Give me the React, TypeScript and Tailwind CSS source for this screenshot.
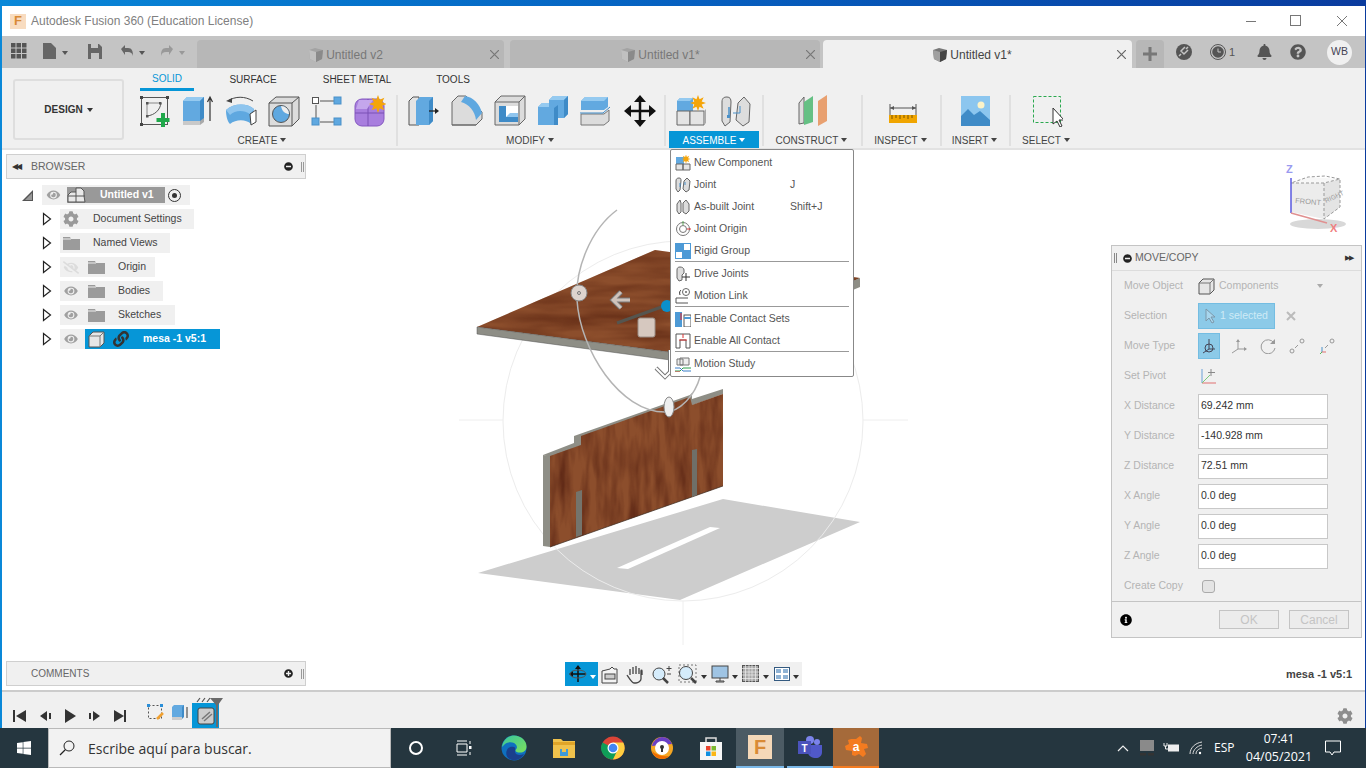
import type { ReactNode } from "react";
import { FaBell, FaCog, FaEye, FaEyeSlash, FaInfoCircle, FaLink, FaMinusCircle, FaPlusCircle, FaQuestionCircle, FaWindows } from "react-icons/fa";

const ui = "font-['Liberation_Sans',Arial,sans-serif]";

function Ico({ w = 32, h = 32, children, className }: { w?: number; h?: number; children: ReactNode; className?: string }) {
  return (
    <svg width={w} height={h} viewBox={`0 0 ${w} ${h}`} className={className} fill="none">
      {children}
    </svg>
  );
}

function Caret({ color = "#555" }: { color?: string }) {
  return <span className="inline-block w-0 h-0 border-l-[3.5px] border-r-[3.5px] border-t-[4px] border-l-transparent border-r-transparent" style={{ borderTopColor: color }} />;
}

function TabCube({ dark }: { dark?: boolean }) {
  return (
    <Ico w={16} h={16}>
      <path d="M1 3l6-2 8 2-1 9-6 3-6-3z" fill={dark ? "#777" : "#a3a3a3"} />
      <path d="M8 5l7-2-1 9-6 3z" fill={dark ? "#444" : "#8a8a8a"} />
      <path d="M1 3l7 2v10l-6-3z" fill={dark ? "#a0a0a0" : "#c0c0c0"} />
    </Ico>
  );
}

// ribbon icons
const SketchIcon = () => (
  <Ico>
    <rect x="2.5" y="2.5" width="26" height="27" stroke="#555" />
    {[[1, 1], [27, 1], [1, 28]].map(([x, y]) => <rect key={x + "-" + y} x={x} y={y} width="3" height="3" fill="#444" />)}
    <path d="M8 8h14M8 8v14" stroke="#888" />
    <path d="M8 21c8-1 13-6 14-13" stroke="#555" />
    <rect x="7" y="7" width="2.5" height="2.5" fill="#555" /><rect x="7" y="20" width="2.5" height="2.5" fill="#555" /><rect x="20" y="7" width="2.5" height="2.5" fill="#555" />
    <path d="M24 18v14M17.5 25h13" stroke="#1fa84a" strokeWidth="4" />
  </Ico>
);
const ExtrudeIcon = () => (
  <Ico>
    <path d="M1 6l4-4h17v24l-4 0H1z" fill="#62a9e0" />
    <path d="M1 6l4-4h17l-4 4z" fill="#95caf0" />
    <path d="M18 6l4-4v22l-4 4z" fill="#3f8bc7" />
    <path d="M1 26h17v4H1z" fill="#c9c9c9" /><path d="M18 26l4-3v4l-4 3z" fill="#aaa" />
    <path d="M28 26V3M25.5 7L28 2l2.500 5" stroke="#333" strokeWidth="1.2" />
  </Ico>
);
const RevolveIcon = () => (
  <Ico>
    <path d="M3 6c7-5 17-5 25 0" stroke="#444" strokeWidth="1" /><path d="M1 6l6-3v5z" fill="#444" />
    <path d="M1 15C9 8 22 8 29 14L26 29C21 24 11 24 5 29C2 26 1 20 1 15z" fill="#5fa8e0" />
    <path d="M1 15C9 8 22 8 29 14L25 19C19 15 10 15 5 20z" fill="#8fc5ee" />
    <path d="M25 19l6-4v12l-5 3z" fill="#fff" stroke="#444" />
  </Ico>
);
const HoleIcon = () => (
  <Ico>
    <path d="M1 8l7-6h23v22l-7 7H1z" fill="#dcdcdc" stroke="#555" />
    <path d="M1 8h23v23M24 8l7-6" stroke="#555" />
    <circle cx="13" cy="19" r="8.500" fill="#5fa8e0" stroke="#555" />
    <path d="M13 11a8 8 0 0 1 8 8c-3 0-7-2-8-8z" fill="#eee" />
  </Ico>
);
const PatternIcon = () => (
  <Ico>
    <path d="M9 6h14M5 10v14M9 27h14" stroke="#555" />
    <rect x="1.500" y="2.500" width="6" height="6" fill="#fff" stroke="#555" />
    <rect x="23" y="2" width="7" height="7" fill="#5fa8e0" stroke="#4a90c8" />
    <rect x="1" y="23" width="7" height="7" fill="#5fa8e0" stroke="#4a90c8" />
    <rect x="23" y="23" width="7" height="7" fill="#5fa8e0" stroke="#4a90c8" />
  </Ico>
);
const Star = ({ cx, cy, r }: { cx: number; cy: number; r: number }) => {
  const pts: string[] = [];
  for (let i = 0; i < 16; i++) {
    const a = (i * Math.PI) / 8;
    const d = i % 2 ? r * 0.5 : r;
    pts.push(`${cx + d * Math.cos(a)},${cy + d * Math.sin(a)}`);
  }
  return <polygon points={pts.join(" ")} fill="#f5a50a" />;
};
const FormIcon = () => (
  <Ico>
    <rect x="1" y="4" width="29" height="27" rx="7" fill="#a87ede" stroke="#8558c0" />
    <path d="M1 18h29M14 4v27" stroke="#7b50b5" />
    <path d="M5 5h14l-6 9H2z" fill="#c4a6ec" />
    <Star cx={24} cy={9} r={9} />
  </Ico>
);
const PressPullIcon = () => (
  <Ico>
    <path d="M1 6l4-4h6v28H1z" fill="#e4e4e4" stroke="#555" />
    <path d="M8 6l4-4h13v24l-4 4H8z" fill="#62a9e0" />
    <path d="M21 6l4-4v24l-4 4z" fill="#3f8bc7" />
    <path d="M21 16h8" stroke="#222" strokeWidth="1.300" /><path d="M27 13l4 3-4 3z" fill="#222" />
  </Ico>
);
const FilletIcon = () => (
  <Ico>
    <path d="M1 7L7 1h8l16 16v7l-6 6H1z" fill="#dcdcdc" stroke="#666" />
    <path d="M14 1c8 1 15 8 17 17l-6 7c-1-9-7-16-15-18z" fill="#5fa8e0" />
    <path d="M1 30h24" stroke="#666" />
  </Ico>
);
const ShellIcon = () => (
  <Ico>
    <path d="M1 7l6-6h24v23l-6 6H1z" fill="#dcdcdc" stroke="#666" />
    <path d="M1 7h24v23M25 7l6-6" stroke="#666" />
    <path d="M5 11h7v11h12v5H5z" fill="#3f8bc7" />
    <path d="M12 11h12v11H12z" fill="#fff" /><path d="M12 22l4-4h8v4z" fill="#8fc5ee" />
  </Ico>
);
const CombineIcon = () => (
  <Ico>
    <path d="M12 5l4-4h15v18l-4 4h-6v7H1V12l4-4h7z" fill="#62a9e0" />
    <path d="M12 5l4-4h15l-4 4zM1 12l4-4h7v4z" fill="#95caf0" />
    <path d="M27 5l4-4v18l-4 4zM17 13l4-3v20l-4 0z" fill="#3f8bc7" />
  </Ico>
);
const SplitIcon = () => (
  <Ico>
    <path d="M1 6l4-4h23v10l-4 3H1z" fill="#62a9e0" /><path d="M1 6l4-4h23l-4 4z" fill="#95caf0" />
    <path d="M1 19h23l5-4v11l-5 4H1z" fill="#dcdcdc" stroke="#777" />
    <path d="M0 18h23l7-6" stroke="#3f8bc7" />
  </Ico>
);
const MoveIcon = () => (
  <Ico>
    <path d="M16 3v26M3 16h26" stroke="#111" strokeWidth="2.500" />
    <path d="M16 0l6 7H10zM16 32l6-7H10zM0 16l7-6v12zM32 16l-7-6v12z" fill="#111" />
  </Ico>
);
const NewCompIcon = () => (
  <Ico>
    <path d="M1 6l3-3h13v13H1z" fill="#62a9e0" /><path d="M1 6l3-3h13l-3 3z" fill="#95caf0" />
    <path d="M1 16h13v14H1z" fill="#e4e4e4" stroke="#666" /><path d="M14 16h14v14H14z" fill="#e4e4e4" stroke="#666" /><path d="M28 16l2-2v14l-2 2z" fill="#aaa" />
    <Star cx={22} cy={8} r={8} />
  </Ico>
);
const JointIcon = () => (
  <Ico>
    <path d="M2 7c0-4 2-5 5-5s4 2 4 5l-1 20-5 4-3-5z" fill="#ddd" stroke="#666" />
    <path d="M30 9l-6-7-6 6-2 17 7 6 6-4z" fill="#ddd" stroke="#666" />
    <path d="M9 12v9" stroke="#4a90c8" strokeWidth="1.500" /><path d="M20 11v7h-7" stroke="#4a90c8" /><rect x="7" y="20" width="3" height="3" fill="#4a90c8" />
  </Ico>
);
const ConstructIcon = () => (
  <Ico>
    <path d="M2 8l5-6v26l-5 1z" fill="#ddd" stroke="#666" />
    <path d="M7 7l9-6v26l-9 3z" fill="#65c084" />
    <path d="M21 6l9-6v26l-9 5z" fill="#e8a070" />
  </Ico>
);
const InspectIcon = () => (
  <Ico>
    <path d="M4 9v12M30 9v12" stroke="#555" /><path d="M4 13h26" stroke="#555" />
    <path d="M4 13l4-2v4zM30 13l-4-2v4z" fill="#555" />
    <rect x="3" y="20" width="28" height="8" fill="#f0a500" />
    <path d="M6 20v4M10 20v3M14 20v4M18 20v3M22 20v4M26 20v3" stroke="#7a5500" />
  </Ico>
);
const InsertIcon = () => (
  <Ico>
    <rect x="1" y="1" width="29" height="30" fill="#8cc6ef" />
    <path d="M1 31V21l7-7 6 6 6-4 10 9v6z" fill="#3f8bc7" />
    <circle cx="21" cy="10" r="3.500" fill="#fdf3c8" />
  </Ico>
);
const SelectIcon = () => (
  <Ico>
    <rect x="2.500" y="1.500" width="27" height="26" stroke="#2aa84f" strokeDasharray="3 2" />
    <path d="M22 19v16l4-3 3 6 2-1-3-6h5z" transform="translate(0 -6)" fill="#fff" stroke="#333" />
  </Ico>
);

const groups: { label: string; width: number; pad?: number; slot?: number; icons: ReactNode[]; active?: boolean }[] = [
  { label: "CREATE", width: 266, pad: 3, slot: 43, icons: [<SketchIcon />, <ExtrudeIcon />, <RevolveIcon />, <HoleIcon />, <PatternIcon />, <FormIcon />] },
  { label: "MODIFY", width: 266, pad: 4, slot: 43.200, icons: [<PressPullIcon />, <FilletIcon />, <ShellIcon />, <CombineIcon />, <SplitIcon />, <MoveIcon />] },
  { label: "ASSEMBLE", width: 96, pad: 4, slot: 44, icons: [<NewCompIcon />, <JointIcon />], active: true },
  { label: "CONSTRUCT", width: 97, icons: [<ConstructIcon />] },
  { label: "INSPECT", width: 77, icons: [<InspectIcon />] },
  { label: "INSERT", width: 67, icons: [<InsertIcon />] },
  { label: "SELECT", width: 72, icons: [<SelectIcon />] },
];

function Chevron() {
  return (
    <Ico w={10} h={14} className="shrink-0">
      <path d="M1.500 1.500L8.500 7l-7 5.500z" fill="#fff" stroke="#222" strokeWidth="1.200" />
    </Ico>
  );
}

function Folder() {
  return (
    <Ico w={17} h={14}>
      <path d="M0 1h7l1 2h9v11H0z" fill="#9b9b9b" /><path d="M0 3h8" stroke="#eee" />
    </Ico>
  );
}

const SmallCube = ({ size = 17 }: { size?: number }) => (
  <svg width={size} height={size} viewBox="0 0 17 17" fill="none">
    <path d="M1 5l4-4h11v11l-4 4H1z" fill="#e6e6e6" stroke="#555" />
    <path d="M1 5h11v11M12 5l4-4" stroke="#777" />
  </svg>
);

function TreeRow({ width, icon, label }: { width: number; icon: ReactNode; label: string }) {
  return (
    <div className="flex items-center h-[24px] pl-[36px]">
      <Chevron />
      <div className="ml-[8px] h-[20px] flex items-center bg-[#f0f0f0] text-[10.500px] text-[#444]" style={{ width }}>
        {icon}
        <span>{label}</span>
      </div>
    </div>
  );
}

function BrowserPanel() {
  const eye = <FaEye className="w-[16px] h-[12px] text-[#a0a0a0] ml-[3px] shrink-0" />;
  return (
    <div className="absolute left-[4px] top-[4px] w-[300px]">
      <div className="h-[25px] flex items-center bg-[#f0f0f0] border border-[#cfcfcf] text-[10.500px] text-[#666]">
        <span className="w-[24px] pl-[5px] text-[8px] text-[#333] tracking-[-2px]">◀◀</span>
        <span className="flex-1">BROWSER</span>
        <FaMinusCircle className="w-[9px] h-[9px] text-[#222] mr-[8px]" />
        <span className="w-[3px] h-[10px] border-x border-[#999] mr-[1px]" />
      </div>
      <div className="pt-[4px]">
        <div className="flex items-center h-[24px] pl-[16px]">
          <Ico w={12} h={13} className="shrink-0"><path d="M0 12L11 1v11z" fill="#555" /><path d="M3 11l7-7v7z" fill="#fff" opacity=".4" /></Ico>
          <div className="ml-[8px] w-[148px] h-[20px] flex items-center bg-[#f0f0f0]">
            <FaEye className="w-[17px] h-[12px] text-[#a0a0a0] ml-[3px]" />
            <div className="ml-[5px] w-[98px] h-[16px] bg-[#999] flex items-center text-white font-bold text-[10.500px]">
              <Ico w={19} h={16}><path d="M1 8l3-3h5V1h5l3 3v5l1 6H1z" fill="#e8e8e8" stroke="#555" /><path d="M9 5v10M1 9h17" stroke="#555" /></Ico>
              <span className="ml-[14px]">Untitled v1</span>
            </div>
            <span className="ml-[3px] w-[13px] h-[13px] rounded-full border border-[#333] flex items-center justify-center"><span className="w-[5px] h-[5px] rounded-full bg-[#333]" /></span>
          </div>
        </div>
        <TreeRow width={134} label="Document Settings" icon={<span className="w-[33px] pl-[3px] shrink-0"><FaCog className="w-[16px] h-[16px] text-[#9a9a9a]" /></span>} />
        <TreeRow width={110} label="Named Views" icon={<span className="w-[33px] pl-[3px] shrink-0"><Folder /></span>} />
        <TreeRow width={95} label="Origin" icon={<span className="w-[58px] pl-[3px] shrink-0 flex items-center"><FaEyeSlash className="w-[16px] h-[13px] text-[#dcdcdc]" /><span className="ml-[9px]"><Folder /></span></span>} />
        <TreeRow width={103} label="Bodies" icon={<span className="w-[58px] pl-[3px] shrink-0 flex items-center"><FaEye className="w-[16px] h-[12px] text-[#a0a0a0]" /><span className="ml-[9px]"><Folder /></span></span>} />
        <TreeRow width={115} label="Sketches" icon={<span className="w-[58px] pl-[3px] shrink-0 flex items-center"><FaEye className="w-[16px] h-[12px] text-[#a0a0a0]" /><span className="ml-[9px]"><Folder /></span></span>} />
        <div className="flex items-center h-[24px] pl-[36px]">
          <Chevron />
          <div className="ml-[8px] h-[20px] w-[25px] bg-[#f0f0f0] flex items-center">{eye}</div>
          <div className="h-[20px] w-[135px] bg-[#0696d7] flex items-center text-white font-bold text-[10.500px]">
            <span className="ml-[3px]"><SmallCube /></span>
            <FaLink className="ml-[8px] w-[16px] h-[16px] text-[#333]" />
            <span className="ml-[14px]">mesa -1 v5:1</span>
          </div>
        </div>
      </div>
    </div>
  );
}

const menuIcon = {
  comp: <Ico w={16} h={16}><path d="M1 2h8v7H1z" fill="#62a9e0" /><path d="M1 9h7v6H1zM8 9h7v6H8z" fill="#e4e4e4" stroke="#666" /><Star cx={11} cy={4} r={4.500} /></Ico>,
  joint: <Ico w={16} h={16}><path d="M1 4c0-2 1-3 3-3s2 1 2 3l-1 9-2 2-2-3zM15 4l-3-3-3 3-1 8 3 3 3-2z" fill="#ddd" stroke="#666" /><path d="M5 6v4M10 5v3" stroke="#4a90c8" /></Ico>,
  built: <Ico w={16} h={16}><path d="M2 5l3-4 1 3v9l-2 2-2-3zM14 5l-3-4-3 3v9l3 2 3-3z" fill="#ddd" stroke="#666" /></Ico>,
  origin: <Ico w={16} h={16}><circle cx="8" cy="8" r="6.500" stroke="#777" /><circle cx="8" cy="8" r="3.500" stroke="#777" /><path d="M8 0v4" stroke="#5aa857" /><path d="M12 8h4" stroke="#d33" /></Ico>,
  rigid: <Ico w={16} h={16}><rect width="16" height="16" fill="#4d9ad6" /><rect x="9" y="1" width="6" height="6" fill="#fff" /><rect x="1" y="9" width="6" height="6" fill="#fff" /></Ico>,
  drive: <Ico w={16} h={16}><path d="M2 4c0-2 1-3 3-3s4 1 4 3v3l-2 2v5l-3 1-2-3z" fill="#ddd" stroke="#666" /><path d="M11 7v8M7 11h8" stroke="#333" /></Ico>,
  link: <Ico w={16} h={16}><circle cx="11" cy="4" r="3.500" stroke="#666" /><circle cx="11" cy="4" r="1" fill="#666" /><path d="M5 7c-1-3 0-4 1-5" stroke="#333" /><path d="M1 10h12M1 15h12M1 10v5" stroke="#555" /></Ico>,
  sets: <Ico w={16} h={16}><rect y="1" width="7" height="15" fill="#4d9ad6" /><path d="M6 2v7" stroke="#e22" /><rect x="9" y="4" width="7" height="12" fill="#fff" stroke="#555" /><path d="M9 7h7" stroke="#4d9ad6" strokeWidth="2" /></Ico>,
  all: <Ico w={16} h={16}><path d="M1 15V1h14v14h-4V7H5v8z" stroke="#555" /><path d="M4 7h8M8 1v4" stroke="#d33" /></Ico>,
  study: <Ico w={16} h={16}><path d="M5 2h9v7H5zM2 3h6v6H2z" fill="#eee" stroke="#777" /><path d="M0 15h5l3-3h8" stroke="#2a9d4b" /><path d="M0 12h5l3 3h8" stroke="#3b7fc8" /><path d="M0 16h5" stroke="#d33" /></Ico>,
};

const menuGroups: { icon: ReactNode; label: string; key?: string }[][] = [
  [
    { icon: menuIcon.comp, label: "New Component" },
    { icon: menuIcon.joint, label: "Joint", key: "J" },
    { icon: menuIcon.built, label: "As-built Joint", key: "Shift+J" },
    { icon: menuIcon.origin, label: "Joint Origin" },
    { icon: menuIcon.rigid, label: "Rigid Group" },
  ],
  [
    { icon: menuIcon.drive, label: "Drive Joints" },
    { icon: menuIcon.link, label: "Motion Link" },
  ],
  [
    { icon: menuIcon.sets, label: "Enable Contact Sets" },
    { icon: menuIcon.all, label: "Enable All Contact" },
  ],
  [{ icon: menuIcon.study, label: "Motion Study" }],
];

function AssembleMenu() {
  return (
    <div className="absolute left-[668px] top-[-1px] w-[184px] h-[228px] bg-white border border-[#888] rounded-[2px] pt-[2px] text-[10.500px] text-[#555]">
      {menuGroups.map((g, i) => (
        <div key={i} className={i > 0 ? "border-t border-[#999] mx-[4px] -mt-[1px] pt-[1px]" : ""}>
          {g.map((m) => (
            <div key={m.label} className={"flex items-center h-[22px] " + (i > 0 ? "pl-[0px]" : "pl-[4px]")}>
              <span className="w-[19px] flex items-center">{m.icon}</span>
              <span className="w-[96px] ml-[0px]">{m.label}</span>
              <span>{m.key}</span>
            </div>
          ))}
        </div>
      ))}
    </div>
  );
}

const distances = [
  ["X Distance", "69.242 mm"],
  ["Y Distance", "-140.928 mm"],
  ["Z Distance", "72.51 mm"],
  ["X Angle", "0.0 deg"],
  ["Y Angle", "0.0 deg"],
  ["Z Angle", "0.0 deg"],
];

function MovePanel() {
  return (
    <div className="absolute left-[1109px] top-[95px] w-[251px] h-[393px] bg-[#f0f0f0] border border-[#c4c4c4] flex flex-col text-[10.500px] text-[#b4b4b4]">
      <div className="h-[25px] shrink-0 flex items-center border-b border-[#dcdcdc] text-[#666]">
        <span className="ml-[2px] w-[3px] h-[10px] border-x border-[#888]" />
        <FaMinusCircle className="ml-[6px] w-[9px] h-[9px] text-[#222]" />
        <span className="ml-[3px] flex-1">MOVE/COPY</span>
        <span className="text-[7px] text-[#333] tracking-[-1.500px] mr-[9px]">▶▶</span>
      </div>
      <div className="pl-[12px] flex-1">
        <div className="flex items-center h-[30px]">
          <span className="w-[74px]">Move Object</span>
          <SmallCube />
          <span className="ml-[4px] w-[98px]">Components</span>
          <Caret color="#aaa" />
        </div>
        <div className="flex items-center h-[30px]">
          <span className="w-[74px]">Selection</span>
          <div className="w-[77px] h-[26px] bg-[#8ccae8] border border-[#74bde2] flex items-center pl-[6px] text-[#cfeaf6]">
            <Ico w={12} h={16}><path d="M1 1v12l3-3 3 5 2-1-3-5h4z" fill="#a7d6ee" stroke="#7d98aa" /></Ico>
            <span className="ml-[3px]">1 selected</span>
          </div>
          <svg width="10" height="10" viewBox="0 0 10 10" className="ml-[11px]"><path d="M1 1l8 8M9 1L1 9" stroke="#bbb" strokeWidth="2" /></svg>
        </div>
        <div className="flex items-center h-[30px]">
          <span className="w-[74px]">Move Type</span>
          <div className="w-[22px] h-[26px] bg-[#8ccae8] border border-[#74bde2] flex items-center justify-center">
            <Ico w={16} h={16}><path d="M8 1v10M8 11l6 0M8 11l-6 4" stroke="#445" /><circle cx="8" cy="10" r="4" stroke="#445" /></Ico>
          </div>
          <Ico w={16} h={16} className="ml-[11px]"><path d="M7 2v9h8M7 11l-6 4" stroke="#999" /><path d="M5 4l2-3 2 3zM13 9l3 2-3 2z" fill="#999" /></Ico>
          <Ico w={16} h={16} className="ml-[13px]"><path d="M14 5a7 7 0 1 0 1 5" stroke="#999" /><path d="M15 1v5h-5z" fill="#999" /></Ico>
          <Ico w={16} h={16} className="ml-[13px]"><circle cx="13" cy="3" r="2" stroke="#999" /><circle cx="3" cy="13" r="2" stroke="#999" /><path d="M9 7l-3 3" stroke="#999" /></Ico>
          <Ico w={16} h={16} className="ml-[14px]"><circle cx="13" cy="3" r="2" stroke="#999" /><path d="M9 7l-3 3" stroke="#999" /><path d="M3 9v5" stroke="#4a90c8" /><path d="M3 14h4" stroke="#e07070" /><path d="M3 14l-2 2" stroke="#5ab85a" /></Ico>
        </div>
        <div className="flex items-center h-[30px]">
          <span className="w-[76px]">Set Pivot</span>
          <Ico w={16} h={16}><path d="M2 1v14" stroke="#6aa0d8" /><path d="M2 15h14" stroke="#e07070" /><path d="M2 15l8-8" stroke="#7cc87c" /><path d="M11 1v7M8 4.500h7" stroke="#888" /></Ico>
        </div>
        {distances.map(([label, value]) => (
          <div key={label} className="flex items-center h-[30px]">
            <span className="w-[74px]">{label}</span>
            <div className="w-[130px] h-[25px] bg-white border border-[#c8c8c8] flex items-center pl-[2px] text-[#333]">{value}</div>
          </div>
        ))}
        <div className="flex items-center h-[30px]">
          <span className="w-[78px]">Create Copy</span>
          <span className="w-[13px] h-[13px] rounded-[3px] border border-[#aaa] bg-[#e4e4e4]" />
        </div>
      </div>
      <div className="h-[36px] shrink-0 border-t border-[#c4c4c4] flex items-center text-[12px] text-[#c4c4c4]">
        <FaInfoCircle className="ml-[8px] w-[12px] h-[12px] text-black" />
        <div className="ml-[87px] w-[60px] h-[19px] bg-[#ececec] border border-[#c4c4c4] flex items-center justify-center">OK</div>
        <div className="ml-[10px] w-[60px] h-[19px] bg-[#ececec] border border-[#c4c4c4] flex items-center justify-center">Cancel</div>
      </div>
    </div>
  );
}

function Scene() {
  return (
    <svg className="absolute inset-0" width="1363" height="540" viewBox="2 150 1363 540" fill="none">
      <defs>
        <filter id="woodH" x="0" y="0" width="100%" height="100%" colorInterpolationFilters="sRGB">
          <feTurbulence type="fractalNoise" baseFrequency="0.012 0.07" numOctaves="3" seed="7" result="n" />
          <feColorMatrix in="n" type="matrix" values="0 0 0 0 0.36 0 0 0 0 0.15 0 0 0 0 0.07 1.500 0 0 0 -0.50" />
          <feComposite in2="SourceGraphic" operator="in" result="s" />
          <feMerge><feMergeNode in="SourceGraphic" /><feMergeNode in="s" /></feMerge>
        </filter>
        <filter id="woodV" x="0" y="0" width="100%" height="100%" colorInterpolationFilters="sRGB">
          <feTurbulence type="fractalNoise" baseFrequency="0.1 0.02" numOctaves="3" seed="11" result="n" />
          <feColorMatrix in="n" type="matrix" values="0 0 0 0 0.36 0 0 0 0 0.15 0 0 0 0 0.08 1.500 0 0 0 -0.52" />
          <feComposite in2="SourceGraphic" operator="in" result="s" />
          <feMerge><feMergeNode in="SourceGraphic" /><feMergeNode in="s" /></feMerge>
        </filter>
      </defs>
      <polygon points="478,573 723,499 860,522 680,600" fill="#cdcdcd" />
      <polygon points="617,568 710,527 720,528 628,569" fill="#fff" />
      <circle cx="683" cy="421" r="180" stroke="#ececec" />
      <path d="M459 420h44M863 420h45M683 601v44" stroke="#eeeeee" />
      {/* lower board */}
      <polygon points="543,455 574,443 574,436 690,395 692,393 692,399 723,389 723,394 581,446 550,457" fill="#8e8e86" />
      <polygon points="543,455 550,456 550,547 543,546" fill="#8e8e86" />
      <polygon points="550,456 581,445 581,436 690,397 692,405 723,394 723,486 550,547" fill="#8c4e2c" filter="url(#woodV)" />
      <path d="M550 547L723 486" stroke="#3a2a20" strokeWidth=".7" />
      <polygon points="692,450 697,449 697,495 692,497" fill="#6f6f68" />
      <polygon points="576,492 582,490 582,535 576,537" fill="#74746c" />
      {/* top plate */}
      <polygon points="477,327 655,250 860,278 700,356" fill="#8c4e2c" filter="url(#woodH)" />
      <polygon points="477,327 700,356 700,364 477,334" fill="#8e8e86" stroke="#555" strokeWidth=".5" />
      <polygon points="848,283 860,278 860,287 848,292" fill="#8e8e86" />
      {/* gizmo */}
      <path d="M617 210C590 230 575 270 577 300C580 350 620 412 665 412C680 412 695 395 700 377" stroke="#b4b4b4" strokeWidth="1.500" />
      <circle cx="579" cy="293" r="8" fill="#ddd3cd" stroke="#888" />
      <circle cx="579" cy="293" r="1.500" stroke="#777" />
      <ellipse cx="669" cy="407" rx="5" ry="10" fill="#eee" stroke="#888" />
      <path d="M617 323l50-18" stroke="#55554f" strokeWidth="3" />
      <path d="M630 300h-16M621 292l-8 8 8 8" stroke="#777" strokeWidth="5" />
      <path d="M630 300h-16M621 292l-8 8 8 8" stroke="#cfc3bb" strokeWidth="3" />
      <rect x="638" y="318" width="17" height="19" rx="2" fill="#d6c8bf" stroke="#9a8d85" />
      <circle cx="667" cy="306" r="6" fill="#0a90cc" />
      <path d="M670 350v22l-5 5-9-9" stroke="#777" strokeWidth="4" />
      <path d="M670 350v22l-5 5-9-9" stroke="#fff" strokeWidth="2" />
    </svg>
  );
}

function ViewCube() {
  return (
    <svg className="absolute left-[1280px] top-[12px]" width="78" height="76" viewBox="0 0 78 76" fill="none">
      <ellipse cx="36" cy="62" rx="28" ry="5" fill="#d8d8d8" />
      <path d="M9 21h33v36L9 50z" fill="#ececec" />
      <path d="M42 21l16-4v28l-16 12z" fill="#e4e4e4" />
      <path d="M9 21l17-6 32 2-16 4z" fill="#f7f7f7" />
      <path d="M9 21h33l16-4-15-3-17 1zM42 21v36l16-12V17" stroke="#999" strokeDasharray="3 2" />
      <path d="M9 16v35" stroke="#5a5ae0" strokeWidth="1.500" />
      <path d="M9 51l36 10" stroke="#e09090" strokeWidth="1.500" />
      <text x="4" y="11" fontSize="11" fontWeight="700" fill="#9a9af0" fontFamily="Liberation Sans">Z</text>
      <text x="48" y="70" fontSize="11" fontWeight="700" fill="#f08080" fontFamily="Liberation Sans">X</text>
      <text x="13" y="41" fontSize="7.500" fill="#999" fontFamily="Liberation Sans" transform="rotate(5 13 41)">FRONT</text>
      <text x="44" y="41" fontSize="6.500" fill="#999" fontFamily="Liberation Sans" transform="rotate(-25 44 41)">RIGHT</text>
    </svg>
  );
}

function NavBar() {
  const caret = <span className="ml-[3px]"><Caret color="#333" /></span>;
  return (
    <div className="absolute left-[563px] top-[512px] h-[24px] w-[237px] bg-[#f0f0f0] flex items-center">
      <div className="w-[33px] h-full bg-[#0696d7] flex items-center pl-[3px]">
        <Ico w={20} h={20}><path d="M10 2v16M2 10h16" stroke="#111" strokeWidth="1.500" /><path d="M10 1l3 4H7zM1 10l4-3v6z" fill="#111" /><ellipse cx="10" cy="10" rx="8" ry="4" stroke="#555" /></Ico>
        <span className="ml-[2px]"><Caret color="#fff" /></span>
      </div>
      <Ico w={20} h={20} className="ml-[1px]"><path d="M3 7l8-2 2-2 2 2h3v14H3z" fill="#f4f4f4" stroke="#444" /><rect x="6" y="10" width="10" height="5" fill="#ccc" stroke="#444" /></Ico>
      <Ico w={20} h={20} className="ml-[6px]"><path d="M5 11V5M8 10V3M11 10V2M14 10V4M17 11V7c0-1-1-1-1 0v8c0 2-3 4-5 4H9c-2 0-5-5-7-8" stroke="#444" strokeWidth="1.300" /></Ico>
      <Ico w={22} h={20} className="ml-[6px]"><circle cx="8" cy="10" r="6" fill="#d5ecfb" stroke="#444" /><path d="M12 14l5 5" stroke="#444" strokeWidth="2.500" /><path d="M18 2v5M15.500 4.500h5M16 10h4" stroke="#444" /></Ico>
      <Ico w={20} h={20} className="ml-[5px]"><rect x="1" y="1" width="17" height="17" stroke="#777" strokeDasharray="2 2" /><circle cx="8" cy="9" r="6.500" fill="#d5ecfb" stroke="#444" /><path d="M13 14l5 5" stroke="#444" strokeWidth="2.500" /></Ico>
      {caret}
      <Ico w={18} h={20} className="ml-[4px]"><rect x="1" y="2" width="16" height="12" fill="#9fc4e4" stroke="#444" /><path d="M5 17h8v1H5z" stroke="#444" /><path d="M9 14v3" stroke="#444" /></Ico>
      {caret}
      <Ico w={18} h={18} className="ml-[4px]"><rect x=".5" y=".5" width="16" height="16" fill="#a8a8a8" stroke="#555" /><path d="M3.500 0v17M7 0v17M10 0v17M13.500 0v17M0 3.500h17M0 7h17M0 10h17M0 13.500h17" stroke="#eee" strokeWidth=".7" /></Ico>
      {caret}
      <Ico w={16} h={14} className="ml-[5px]"><rect x=".5" y=".5" width="15" height="13" fill="#fff" stroke="#345a80" /><path d="M2 2h5v4H2zM9 2h5v4H9zM2 8h5v4H2zM9 8h5v4H9z" fill="#8eb2d4" /></Ico>
      {caret}
    </div>
  );
}

function EdgeLogo() {
  return (
    <Ico w={26} h={26}>
      <defs>
        <linearGradient id="edgeA" x1="0" y1="0" x2="1" y2="1"><stop offset="0" stopColor="#36c5a0" /><stop offset="1" stopColor="#7ee05a" /></linearGradient>
      </defs>
      <circle cx="13" cy="13" r="12.500" fill="#0f70bf" />
      <path d="M1 12C2 4 8 .5 13 .5c7 0 12.500 5 12.500 11 0 4-3 6-6.500 6-3 0-5-1-4.500-2.500 1-1 2-2 1-4.500C14 7 8 6 4 9c-1 .8-2 2-3 3z" fill="url(#edgeA)" />
      <path d="M11 25c-5-1-7-6-5-10 1-2.500 4-4 7-3 2 .8 1 3 1 5 .5 3 5 4 9 2-2 4-7 7-12 6z" fill="#1a3f8c" />
    </Ico>
  );
}

function ChromeLogo() {
  return (
    <Ico w={24} h={24}>
      <circle cx="12" cy="12" r="11.500" fill="#db4437" />
      <path d="M12 12L1.500 6.500A11.500 11.500 0 0 0 12 23.500L18 12z" fill="#0f9d58" />
      <path d="M12 6.500h10.300A11.500 11.500 0 0 1 12 23.500L17 13z" fill="#ffcd40" />
      <circle cx="12" cy="12" r="5.500" fill="#fff" /><circle cx="12" cy="12" r="4.300" fill="#4285f4" />
    </Ico>
  );
}

function Taskbar() {
  const slot = "h-full flex items-center justify-center shrink-0";
  return (
    <div className="h-[40px] shrink-0 bg-[#25363f] flex items-center text-white relative">
      <div className={slot + " w-[48px]"}><FaWindows className="w-[16px] h-[16px]" /></div>
      <div className="w-[343px] h-full bg-[#f2f2f2] border border-[#b9b9b9] flex items-center pl-[10px] text-[14px] text-[#333] font-['Open_Sans',sans-serif]">
        <Ico w={16} h={16}><circle cx="10" cy="6" r="5" stroke="#222" /><path d="M6.500 9.500L1 15" stroke="#222" strokeWidth="1.300" /></Ico>
        <span className="ml-[13px]">Escribe aquí para buscar.</span>
      </div>
      <div className={slot + " w-[49px]"}><span className="w-[14px] h-[14px] rounded-full border-2 border-white" /></div>
      <div className={slot + " w-[48px]"}>
        <Ico w={16} h={16}><path d="M1 1h10M1 15h10M1 4h10v8H1zM14 1v3M14 12v3" stroke="#fff" /><rect x="13" y="6" width="2.500" height="3" fill="#fff" /></Ico>
      </div>
      <div className={slot + " w-[52px]"}><EdgeLogo /></div>
      <div className={slot + " w-[48px]"}>
        <Ico w={22} h={20}><path d="M0 1h8l2 2h12v17H0z" fill="#f0c24c" /><path d="M0 4h22v3H0z" fill="#e0a528" /><path d="M7 11h8v7H7z" fill="#3f9ad8" /><path d="M9 11h4v3H9z" fill="#f0c24c" /></Ico>
      </div>
      <div className={slot + " w-[50px]"}><ChromeLogo /></div>
      <div className={slot + " w-[47px]"}>
        <Ico w={24} h={24}>
          <circle cx="12" cy="12" r="11" fill="#f5a623" /><path d="M12 1a11 11 0 0 1 10 7l-20 2A11 11 0 0 1 12 1z" fill="#6a3fc4" /><path d="M2 15a11 11 0 0 0 10 8c3 0 5-1 7-3-6 1-13-1-17-5z" fill="#ef6c00" />
          <circle cx="12" cy="12" r="7" fill="#fff" /><circle cx="12" cy="11" r="2" fill="#333" /><rect x="11" y="12" width="2" height="4" fill="#333" />
        </Ico>
      </div>
      <div className={slot + " w-[51px]"}>
        <Ico w={24} h={24}>
          <path d="M1 6h22v18H1z" fill="#f6f6f6" /><path d="M7 6V2h10v4" stroke="#ddd" strokeWidth="1.500" />
          <rect x="7" y="10" width="4.500" height="4.500" fill="#e8432e" /><rect x="12.500" y="10" width="4.500" height="4.500" fill="#7cb82f" /><rect x="7" y="15.500" width="4.500" height="4.500" fill="#0f8fe0" /><rect x="12.500" y="15.500" width="4.500" height="4.500" fill="#fbb615" />
        </Ico>
      </div>
      <div className={slot + " w-[48px] bg-[#4c5b64] border-b-2 border-[#7ab8e8]"}>
        <div className="w-[24px] h-[24px] bg-[#f5d8b8] flex items-center justify-center text-[20px] font-bold text-[#d98a35] font-['Liberation_Sans',sans-serif]">F</div>
      </div>
      <div className={slot + " w-[3px]"} />
      <div className={slot + " w-[46px] border-b-2 border-[#7ab8e8]"}>
        <Ico w={26} h={24}>
          <circle cx="20" cy="7" r="3" fill="#7b83eb" /><circle cx="13" cy="5" r="4" fill="#7b83eb" /><path d="M11 10h14v7c0 4-3 6-6 6-4 0-8-2-8-6z" fill="#5059c9" />
          <rect x="1" y="6" width="13" height="13" fill="#4b53bc" /><text x="7.500" y="16.500" fontSize="10" fontWeight="700" fill="#fff" textAnchor="middle" fontFamily="Liberation Sans">T</text>
        </Ico>
      </div>
      <div className={slot + " w-[46px] bg-[#a56a3a] border-b-2 border-[#f47b20]"}>
        <Ico w={26} h={24}>
          <path d="M13 4l4-3 2 2-1 5 6 1 1 4-4 1 2 5-3 3-4-3-4 2-3-1v-4l-6-1-1-4 4-2-1-4 3-1z" fill="#f47b20" />
          <text x="13" y="16" fontSize="12" fontWeight="700" fill="#fff" textAnchor="middle" fontFamily="Liberation Sans">a</text>
        </Ico>
      </div>
      <div className="flex-1" />
      <div className="flex items-center h-full text-[12px] font-['Open_Sans',sans-serif]">
        <Ico w={12} h={8}><path d="M1 7l5-5 5 5" stroke="#eee" strokeWidth="1.200" /></Ico>
        <Ico w={14} h={16} className="ml-[11px]"><rect width="14" height="11" fill="#8a8a8a" /><rect y="13" width="6" height="2.500" fill="#333" /><rect x="8" y="13" width="6" height="2.500" fill="#333" /></Ico>
        <Ico w={16} h={12} className="ml-[9px]"><path d="M1 1v3h3V1M2.500 4v3h3" stroke="#eee" /><rect x="5.500" y="3" width="10" height="6" stroke="#eee" fill="#eee" /></Ico>
        <Ico w={14} h={14} className="ml-[10px]"><path d="M1 13C1 7 6 2 13 1M4 13c0-4 4-8 9-9M7 13c0-3 2-5 6-6" stroke="#ddd" /><circle cx="11" cy="12" r="1.200" fill="#fff" /></Ico>
        <span className="ml-[11px] w-[31px]">ESP</span>
        <div className="w-[68px] text-center leading-[18px]"><div>07:41</div><div className="text-[12.500px]">04/05/2021</div></div>
        <Ico w={16} h={16} className="ml-[12px] mr-[25px]"><path d="M.5 1h15v11H9l-2 3-2-3H.5z" stroke="#fff" /></Ico>
      </div>
    </div>
  );
}

export default function App() {
  return (
    <div className={"w-[1366px] h-[768px] overflow-hidden flex flex-col bg-white " + ui}>
      <div className="h-[6px] shrink-0 bg-gradient-to-r from-[#0a88d8] via-[#0660c0] to-[#0a3b9e]" />
      <div className="flex-1 min-h-0 flex flex-col border-l-2 border-[#0a88d8] border-r border-r-[#0a3b9e]">
        {/* title bar */}
        <div className="h-[30px] shrink-0 flex items-center bg-white">
          <div className="ml-[8px] w-[16px] h-[15px] bg-[#f8dcc0] flex items-center justify-center text-[13px] font-bold text-[#d98a35]">F</div>
          <span className="ml-[5px] text-[12px] text-[#808080]">Autodesk Fusion 360 (Education License)</span>
          <div className="flex-1" />
          <Ico w={12} h={12}><path d="M1 6.500h10" stroke="#777" /></Ico>
          <Ico w={12} h={12} className="ml-[33px]"><rect x=".5" y=".5" width="10" height="10" stroke="#777" /></Ico>
          <Ico w={12} h={12} className="ml-[34px] mr-[17px]"><path d="M1 1l10 10M11 1L1 11" stroke="#777" /></Ico>
        </div>
        {/* tab bar */}
        <div className="h-[32px] shrink-0 flex items-end bg-[#c4c4c4] text-[12px]">
          <div className="w-[195px] h-full flex items-center pl-[9px] pb-[2px] text-[#555]">
            <Ico w={16} h={16}>
              {[0, 5.500, 11].flatMap((y) => [0, 5.500, 11].map((x) => <rect key={x + "-" + y} x={x} y={y} width="4.500" height="4.500" fill="#555" />))}
            </Ico>
            <Ico w={14} h={16} className="ml-[16px]"><path d="M0 0h8l5 5v11H0z" fill="#666" /></Ico>
            <span className="ml-[5px]"><Caret /></span>
            <Ico w={14} h={15} className="ml-[20px]"><path d="M0 0h11l3 3v12H0z" fill="#666" /><rect x="3" y="0" width="7" height="4" fill="#c4c4c4" /><rect x="3" y="9" width="8" height="6" fill="#c4c4c4" /></Ico>
            <Ico w={14} h={14} className="ml-[18px]"><path d="M1 5l4-4v3h3c4 0 5 3 5 8-1-3-2-4-5-4H5v3z" fill="#666" /></Ico>
            <span className="ml-[5px]"><Caret /></span>
            <Ico w={14} h={14} className="ml-[15px]"><path d="M13 5L9 1v3H6c-4 0-5 3-5 8 1-3 2-4 5-4h3v3z" fill="#999" /></Ico>
            <span className="ml-[5px]"><Caret color="#999" /></span>
          </div>
          <div className="w-[307px] h-[28px] bg-[#b7b7b7] rounded-t-[4px] flex items-center text-[#777]">
            <div className="flex-1 flex items-center justify-center gap-[2px] pl-[4px] pt-[1px]"><TabCube /><span>Untitled v2</span></div>
            <svg width="9" height="9" viewBox="0 0 9 9" className="mr-[5px]"><path d="M0 0l9 9M9 0L0 9" stroke="#777" strokeWidth="1.200" /></svg>
          </div>
          <div className="ml-[6px] w-[310px] h-[28px] bg-[#b7b7b7] rounded-t-[4px] flex items-center text-[#777]">
            <div className="flex-1 flex items-center justify-center gap-[2px] pl-[4px] pt-[1px]"><TabCube /><span>Untitled v1*</span></div>
            <svg width="9" height="9" viewBox="0 0 9 9" className="mr-[5px]"><path d="M0 0l9 9M9 0L0 9" stroke="#777" strokeWidth="1.200" /></svg>
          </div>
          <div className="ml-[3px] w-[309px] h-[28px] bg-[#f0f0f0] rounded-t-[4px] flex items-center text-[#444]">
            <div className="flex-1 flex items-center justify-center gap-[2px] pl-[4px] pt-[1px]"><TabCube dark /><span>Untitled v1*</span></div>
            <svg width="9" height="9" viewBox="0 0 9 9" className="mr-[6px]"><path d="M0 0l9 9M9 0L0 9" stroke="#666" strokeWidth="1.200" /></svg>
          </div>
          <div className="ml-[4px] w-[28px] h-[28px] bg-[#b7b7b7] rounded-t-[4px] flex items-center justify-center">
            <Ico w={14} h={14}><path d="M7 0v14M0 7h14" stroke="#777" strokeWidth="3" /></Ico>
          </div>
          <div className="h-full flex items-center text-[#555]">
            <Ico w={16} h={16} className="ml-[12px]"><circle cx="8" cy="8" r="8" fill="#555" /><path d="M9 3l-4 4 3 3 4-4M5 10l-2 2M10 5l2-2" stroke="#c4c4c4" strokeWidth="1.500" /></Ico>
            <Ico w={16} h={16} className="ml-[18px]"><circle cx="8" cy="8" r="7.500" stroke="#555" /><circle cx="8" cy="8" r="5.800" fill="#555" /><path d="M8 4.500V8h3" stroke="#c4c4c4" /></Ico>
            <span className="ml-[3px] w-[28px] text-[11px]">1</span>
            <FaBell className="w-[15px] h-[16px]" />
            <FaQuestionCircle className="ml-[18px] w-[16px] h-[16px]" />
            <div className="ml-[21px] w-[25px] h-[25px] rounded-full bg-[#f0f0f0] flex items-center justify-center text-[10.500px] text-[#445]">WB</div>
          </div>
        </div>
        {/* ribbon */}
        <div className="h-[82px] shrink-0 flex bg-[#f0f0f0] border-b-2 border-[#e2e2e2]">
          <div className="ml-[11px] mt-[11px] w-[111px] h-[61px] border-2 border-[#dedede] rounded-[3px] flex items-center justify-center gap-[4px] text-[10px] font-bold text-[#333]">
            DESIGN <Caret color="#333" />
          </div>
          <div className="ml-[6px] flex flex-col">
            <div className="h-[24px] flex text-[10px] text-[#333]">
              <div className="ml-[10px] w-[54px] h-[23px] border-b-[3px] border-[#0696d7] text-[#0696d7] flex items-center justify-center">SOLID</div>
              <div className="w-[118px] h-[22px] flex items-center justify-center">SURFACE</div>
              <div className="w-[90px] h-[22px] flex items-center justify-center">SHEET METAL</div>
              <div className="w-[102px] h-[22px] flex items-center justify-center">TOOLS</div>
            </div>
            <div className="flex h-[56px]">
              {groups.map((g, i) => (
                <div key={g.label} className="flex">
                  {i > 0 && <div className="w-[2px] mt-[3px] mb-[2px] bg-[#e0e0e0]" />}
                  <div className="flex flex-col" style={{ width: g.width }}>
                    <div className="flex items-start h-[37px] pt-[3px]" style={{ paddingLeft: g.pad ?? 0, justifyContent: g.pad ? "flex-start" : "center" }}>
                      {g.icons.map((icon, k) => (
                        <div key={k} className="flex justify-center" style={{ width: g.slot ?? 32 }}>{icon}</div>
                      ))}
                    </div>
                    <div className={"h-[17px] mt-[2px] pt-[1px] flex items-center justify-center gap-[3px] text-[10px] " + (g.active ? "mx-[3px] bg-[#0696d7] text-white" : "text-[#444] pr-[2px]")}>
                      {g.label} <Caret color={g.active ? "#fff" : "#444"} />
                    </div>
                  </div>
                </div>
              ))}
            </div>
          </div>
        </div>
        {/* viewport */}
        <div className="relative flex-1 min-h-0 bg-white">
          <Scene />
          <ViewCube />
          <BrowserPanel />
          <AssembleMenu />
          <MovePanel />
          <div className="absolute left-[4px] top-[511px] w-[300px] h-[25px] flex items-center bg-[#f0f0f0] border border-[#cfcfcf] text-[10px] text-[#666]">
            <span className="flex-1 pl-[24px]">COMMENTS</span>
            <FaPlusCircle className="w-[9px] h-[9px] text-[#222] mr-[8px]" />
            <span className="w-[3px] h-[10px] border-x border-[#999] mr-[1px]" />
          </div>
          <NavBar />
          <span className="absolute right-[13px] top-[516px] text-[11px] font-bold text-[#444]">mesa -1 v5:1</span>
        </div>
        {/* timeline */}
        <div className="h-[38px] shrink-0 bg-[#f0f0f0] border-t-2 border-[#cccccc] flex items-center text-[#333]">
          <div className="flex items-center pl-[11px] pt-[12px]">
            <Ico w={14} h={14}><path d="M1 1v12" stroke="#333" strokeWidth="2" /><path d="M13 1v12L3 7z" fill="#333" /></Ico>
            <Ico w={14} h={14} className="ml-[11px]"><path d="M9 2v10L2 7z" fill="#333" /><rect x="11" y="4" width="2" height="6" fill="#333" /></Ico>
            <Ico w={14} h={14} className="ml-[11px]"><path d="M2 0v14l11-7z" fill="#333" /></Ico>
            <Ico w={14} h={14} className="ml-[11px]"><rect x="1" y="4" width="2" height="6" fill="#333" /><path d="M5 2v10l7-5z" fill="#333" /></Ico>
            <Ico w={14} h={14} className="ml-[11px]"><path d="M1 1v12l10-6z" fill="#333" /><path d="M12 1v12" stroke="#333" strokeWidth="2" /></Ico>
          </div>
          <div className="ml-[20px] flex items-end self-stretch pb-[0px]">
            <Ico w={18} h={18} className="mb-[6px]"><rect x="1.500" y="1.500" width="13" height="13" stroke="#555" strokeDasharray="2 2" /><path d="M10 15l6-6" stroke="#f0a030" strokeWidth="2.500" /><rect x="0" y="0" width="3" height="3" fill="#2b8fd8" /><rect x="13" y="0" width="3" height="3" fill="#2b8fd8" /></Ico>
            <Ico w={18} h={18} className="ml-[6px] mb-[6px]"><path d="M1 3l2-2h10v12H1z" fill="#62a9e0" /><path d="M11 3l2-2v12l-2 2z" fill="#3f8bc7" /><path d="M1 13h10v3H1z" fill="#ccc" /><path d="M16 14V3" stroke="#333" /></Ico>
            <div className="ml-[3px] w-[27px] h-[25px] bg-[#0696d7] relative flex items-center justify-center">
              <Ico w={18} h={18}><rect x="1" y="1" width="16" height="16" rx="2" fill="#ccc" stroke="#444" /><path d="M5 12l8-7M7 14l8-7" stroke="#777" strokeWidth="1.500" /></Ico>
              <Ico w={14} h={30} className="absolute -right-[5px] -top-[6px]"><path d="M0 1h13l-5 7v22H6V8z" fill="#6a6a6a" /></Ico>
              <Ico w={16} h={6} className="absolute left-[4px] -top-[6px]"><path d="M1 5l3-4M6 5l3-4M11 5l3-4" stroke="#555" strokeWidth="1.200" /></Ico>
            </div>
          </div>
          <div className="flex-1" />
          <FaCog className="w-[16px] h-[16px] text-[#8e8e8e] mr-[12px] mt-[12px]" />
        </div>
      </div>
      <Taskbar />
    </div>
  );
}
